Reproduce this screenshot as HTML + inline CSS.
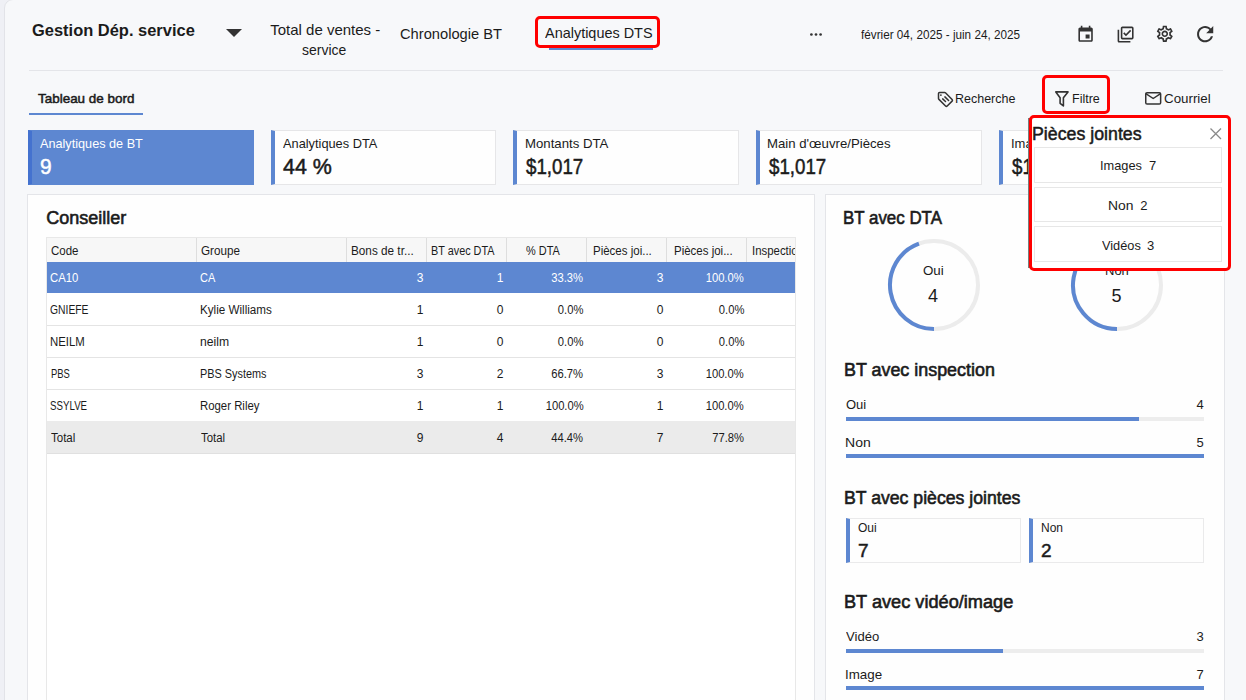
<!DOCTYPE html>
<html lang="fr">
<head>
<meta charset="utf-8">
<title>Gestion Dép. service</title>
<style>
*{box-sizing:border-box;margin:0;padding:0}
html,body{width:1246px;height:700px;overflow:hidden}
body{background:#eff0f5;font-family:"Liberation Sans",sans-serif;color:#1b1b1b;position:relative}
.abs{position:absolute}
.t{position:absolute;white-space:nowrap;line-height:1;transform-origin:0 0}
#shell{position:absolute;left:4px;top:-1px;width:1262px;height:720px;background:#f7f8fa;border:1px solid #e2e3e8;border-radius:9px}
.bd{font-weight:bold}
.sb{font-weight:normal;-webkit-text-stroke:0.5px currentColor}
.blue{background:#5d87d1}
.redbox{position:absolute;border:3px solid #ff0000;border-radius:5px}
.kpi{position:absolute;top:129.5px;height:55.5px;width:225.7px;background:#fefefe;border:1px solid #e6e6e8;border-left:4px solid #5d87d1}
.kpi.sel{background:#5d87d1;border-color:#5d87d1;border-left-color:#4472cf}
.card{position:absolute;background:#fefefe;border:1px solid #e4e5e9}
.h2{font-size:18px;font-weight:normal;-webkit-text-stroke:0.6px currentColor}
.bar{position:absolute;left:846px;width:358px;height:4px;background:#ededed}
.bar i{display:block;height:4px;background:#5d87d1}
.mini{position:absolute;top:518px;height:44.5px;background:#fefefe;border:1px solid #eaeaeb;border-left:4px solid #5d87d1}
.pitem{position:absolute;left:1034px;width:188px;background:#fff;border:1px solid #e7e7e7}
svg{position:absolute;overflow:visible}
.th,.td{font-size:12px}
.t.r{transform-origin:100% 0}
</style>
</head>
<body>
<div id="shell"></div>

<!-- ===== header ===== -->
<div class="t bd" id="t_title" style="left:31.7px;top:22px;font-size:17px;transform:scaleX(0.968)">Gestion Dép. service</div>
<svg style="left:226px;top:29px" width="16" height="8" viewBox="0 0 16 8"><path d="M0 0h16l-8 8z" fill="#333"/></svg>

<div class="t" id="t_tv1" style="left:270.2px;top:22px;font-size:15px">Total de ventes -</div>
<div class="t" id="t_tv2" style="left:302.2px;top:42px;font-size:15px;transform:scaleX(0.932)">service</div>
<div class="t" id="t_chr" style="left:400.0px;top:26px;font-size:15px;transform:scaleX(0.979)">Chronologie BT</div>
<div class="abs" style="left:549px;top:47px;width:104px;height:3px;background:#5d87d1"></div>
<div class="redbox" style="left:535px;top:16px;width:125px;height:32px"></div>
<div class="t" id="t_ana" style="left:545.0px;top:25px;font-size:15px;transform:scaleX(0.963)">Analytiques DTS</div>

<svg style="left:810px;top:32.5px" width="12" height="3" viewBox="0 0 12 3"><circle cx="1.4" cy="1.5" r="1.35" fill="#333"/><circle cx="6" cy="1.5" r="1.35" fill="#333"/><circle cx="10.6" cy="1.5" r="1.35" fill="#333"/></svg>
<div class="t" id="t_date" style="left:861.2px;top:28.7px;font-size:12px;transform:scaleX(0.977)">février 04, 2025 - juin 24, 2025</div>

<!-- icons -->
<svg style="left:1075.8px;top:25.4px" width="19.2" height="19.2" viewBox="0 0 24 24"><path fill="#333" d="M17 12h-5v5h5v-5zM16 1v2H8V1H6v2H5c-1.11 0-1.99.9-1.99 2L3 19c0 1.1.89 2 2 2h14c1.1 0 2-.9 2-2V5c0-1.1-.9-2-2-2h-1V1h-2zm3 18H5V8h14v11z"/></svg>
<svg style="left:1115.8px;top:25px" width="19.2" height="19.2" viewBox="0 0 24 24"><path fill="#333" d="M20 4v12H8V4h12m0-2H8c-1.1 0-2 .9-2 2v12c0 1.1.9 2 2 2h12c1.1 0 2-.9 2-2V4c0-1.1-.9-2-2-2zm-7.530 12L9 10.500l1.400-1.410 2.070 2.080L17.600 6 19 7.410 12.470 14zM4 6H2v14c0 1.100.9 2 2 2h14v-2H4V6z"/></svg>
<svg style="left:1155.2px;top:24.2px" width="19.6" height="19.6" viewBox="0 0 24 24"><path fill="#333" d="M19.430 12.980c.040-.320.070-.640.070-.980 0-.340-.030-.660-.070-.980l2.110-1.650c.190-.150.240-.420.120-.640l-2-3.460c-.090-.160-.260-.250-.440-.250-.060 0-.120.010-.170.030l-2.490 1c-.520-.4-1.080-.730-1.690-.980l-.380-2.650C14.460 2.180 14.250 2 14 2h-4c-.250 0-.460.180-.490.420l-.380 2.650c-.610.250-1.170.590-1.690.980l-2.490-1c-.060-.020-.120-.030-.180-.030-.170 0-.340.090-.430.250l-2 3.460c-.130.220-.070.490.120.640l2.110 1.650c-.040.320-.070.650-.070.980 0 .330.030.660.070.980l-2.110 1.650c-.190.150-.240.420-.120.640l2 3.460c.090.160.260.250.440.250.060 0 .120-.010.170-.030l2.490-1c.520.400 1.080.730 1.690.980l.380 2.650c.030.240.240.420.490.420h4c.250 0 .460-.180.490-.420l.380-2.650c.610-.250 1.170-.590 1.690-.980l2.490 1c.060.020.120.030.180.030.170 0 .340-.090.430-.250l2-3.460c.120-.220.070-.490-.120-.640l-2.110-1.650zm-1.980-1.710c.040.310.050.520.050.730 0 .210-.020.430-.050.730l-.140 1.130.890.700 1.080.840-.7 1.210-1.270-.510-1.040-.420-.9.680c-.430.320-.840.560-1.250.730l-1.060.430-.160 1.130-.2 1.350h-1.400l-.190-1.350-.160-1.130-1.060-.430c-.430-.180-.830-.410-1.230-.710l-.910-.7-1.060.430-1.270.510-.7-1.210 1.080-.840.890-.7-.140-1.130c-.030-.310-.050-.540-.050-.740s.020-.430.050-.730l.140-1.130-.890-.7-1.080-.840.700-1.210 1.270.510 1.040.420.900-.680c.430-.320.840-.560 1.250-.730l1.060-.430.160-1.130.2-1.350h1.390l.190 1.350.160 1.130 1.060.430c.430.180.830.410 1.230.710l.910.700 1.060-.430 1.270-.510.700 1.210-1.070.850-.890.700.140 1.130zM12 8c-2.210 0-4 1.790-4 4s1.790 4 4 4 4-1.790 4-4-1.790-4-4-4zm0 6c-1.100 0-2-.9-2-2s.9-2 2-2 2 .9 2 2-.9 2-2 2z"/></svg>
<svg style="left:1192.9px;top:21.9px" width="24.3" height="24.3" viewBox="0 0 24 24"><path fill="#333" d="M17.650 6.350C16.200 4.900 14.210 4 12 4c-4.420 0-7.990 3.580-7.990 8s3.570 8 7.990 8c3.730 0 6.840-2.550 7.730-6h-2.080c-.820 2.330-3.040 4-5.650 4-3.310 0-6-2.690-6-6s2.690-6 6-6c1.660 0 3.140.69 4.220 1.780L13 11h7V4l-2.350 2.350z"/></svg>

<div class="abs" style="left:29px;top:70px;width:1194px;height:1px;background:#e4e5e9"></div>

<!-- ===== toolbar ===== -->
<div class="t sb" id="t_tab" style="left:37.5px;top:92px;font-size:13px;transform:scaleX(1.034)">Tableau de bord</div>
<div class="abs" style="left:29px;top:113px;width:114px;height:2px;background:#5d87d1"></div>

<!-- tag icon -->
<svg style="left:937px;top:90.5px" width="16.5" height="16.5" viewBox="0 0 16.5 16.5" fill="none" stroke="#333" stroke-width="1.5" stroke-linejoin="round" stroke-linecap="round"><path d="M1.500 2.600 C1.500 2 2 1.600 2.600 1.600 L7.700 1.600 C8.100 1.600 8.400 1.750 8.700 2.050 L15.100 8.450 C15.600 8.950 15.600 9.600 15.100 10.100 L10.200 15 C9.700 15.500 9.050 15.500 8.550 15 L1.950 8.400 C1.650 8.100 1.500 7.800 1.500 7.400 Z"/><path d="M7.900 5.900 L11.600 9.500 M5.700 7.900 L8.500 10.500"/><circle cx="3.900" cy="4.100" r="0.900" fill="#333" stroke="none"/></svg>
<div class="t" id="t_rech" style="left:955.2px;top:92px;font-size:13px;transform:scaleX(0.961)">Recherche</div>

<div class="redbox" style="left:1042px;top:75px;width:68px;height:39px"></div>
<svg style="left:1054px;top:90px" width="16" height="18" viewBox="0 0 16 18" fill="none" stroke="#333" stroke-width="1.600" stroke-linejoin="round"><path d="M1.800 1.900 H14 L9.400 7.700 V15.900 L6.100 13.300 V7.700 Z"/></svg>
<div class="t" id="t_filt" style="left:1072.2px;top:92px;font-size:13px;transform:scaleX(0.962)">Filtre</div>

<svg style="left:1145.200px;top:92.100px" width="16.400" height="13" viewBox="0 0 16.400 13" fill="none" stroke="#333" stroke-width="1.500" stroke-linejoin="round" stroke-linecap="round"><rect x="0.750" y="0.750" width="14.900" height="11.300" rx="1.300"/><path d="M1.200 1.800 L8.200 6.500 L15.200 1.800"/></svg>
<div class="t" id="t_cour" style="left:1163.5px;top:92px;font-size:13px;transform:scaleX(1.026)">Courriel</div>

<!-- ===== KPI cards ===== -->
<div class="kpi sel" style="left:28px"></div>
<div class="kpi" style="left:270.700px"></div>
<div class="kpi" style="left:513.400px"></div>
<div class="kpi" style="left:756.100px"></div>
<div class="kpi" style="left:998.800px"></div>

<div class="t" id="k1a" style="left:40.0px;top:137px;font-size:13px;color:#fff;transform:scaleX(0.975)">Analytiques de BT</div>
<div class="t sb" id="k1b" style="left:40.3px;top:156px;font-size:22px;color:#fff;transform:scaleX(0.950)">9</div>
<div class="t" id="k2a" style="left:283.0px;top:137px;font-size:13px;transform:scaleX(0.984)">Analytiques DTA</div>
<div class="t sb" id="k2b" style="left:283.3px;top:156px;font-size:22px;transform:scaleX(0.974)">44 %</div>
<div class="t" id="k3a" style="left:525.0px;top:137px;font-size:13px;transform:scaleX(1.016)">Montants DTA</div>
<div class="t sb" id="k3b" style="left:526.2px;top:156px;font-size:22px;transform:scaleX(0.851)">$1,017</div>
<div class="t" id="k4a" style="left:767.3px;top:137px;font-size:13px;transform:scaleX(1.015)">Main d'œuvre/Pièces</div>
<div class="t sb" id="k4b" style="left:769.0px;top:156px;font-size:22px;transform:scaleX(0.851)">$1,017</div>
<div class="t" id="k5a" style="left:1011px;top:137px;font-size:13px">Images/Vidéos</div>
<div class="t sb" id="k5b" style="left:1011.500px;top:156px;font-size:22px;transform:scaleX(0.851)">$1,017</div>

<!-- ===== left main card ===== -->
<div class="card" style="left:27px;top:194px;width:788px;height:520px"></div>
<div class="t h2" id="h_cons" style="left:46.3px;top:209px;transform:scaleX(1.000)">Conseiller</div>

<!-- table frame -->
<div class="abs" id="tbl" style="left:46px;top:237px;width:750px;height:480px;border:1px solid #e8e8e8;background:#fff;overflow:hidden">
  <div class="abs" style="left:0;top:0;width:748px;height:24px;background:#f7f7f7"></div>
  <div class="abs" style="left:0;top:24px;width:748px;height:30.700px;background:#5d87d1"></div>
  <div class="abs" style="left:0;top:87px;width:748px;height:1px;background:#e4e4e4"></div>
  <div class="abs" style="left:0;top:119px;width:748px;height:1px;background:#e4e4e4"></div>
  <div class="abs" style="left:0;top:151px;width:748px;height:1px;background:#e4e4e4"></div>
  <div class="abs" style="left:0;top:183px;width:748px;height:1px;background:#e4e4e4"></div>
  <div class="abs" style="left:0;top:183.300px;width:748px;height:31.500px;background:#ebebeb"></div>
  <div class="abs" style="left:0;top:214.800px;width:748px;height:1px;background:#e0e0e0"></div>
  <!-- column separators (header only) -->
  <div class="abs" style="left:148.7px;top:0;width:1px;height:24px;background:#dedede"></div>
  <div class="abs" style="left:298.7px;top:0;width:1px;height:24px;background:#dedede"></div>
  <div class="abs" style="left:378.7px;top:0;width:1px;height:24px;background:#dedede"></div>
  <div class="abs" style="left:458.7px;top:0;width:1px;height:24px;background:#dedede"></div>
  <div class="abs" style="left:538.7px;top:0;width:1px;height:24px;background:#dedede"></div>
  <div class="abs" style="left:618.7px;top:0;width:1px;height:24px;background:#dedede"></div>
  <div class="abs" style="left:698.7px;top:0;width:1px;height:24px;background:#dedede"></div>
</div>
<div class="t th" id="th0" style="left:51.0px;top:245px;transform:scaleX(0.959)">Code</div>
<div class="t th" id="th1" style="left:201.0px;top:245px;transform:scaleX(0.975)">Groupe</div>
<div class="t th" id="th2" style="left:350.9px;top:245px;transform:scaleX(0.979)">Bons de tr...</div>
<div class="t th" id="th3" style="left:430.7px;top:245px;transform:scaleX(0.904)">BT avec DTA</div>
<div class="t th" id="th4" style="left:526.0px;top:245px;transform:scaleX(0.911)">% DTA</div>
<div class="t th" id="th5" style="left:593.0px;top:245px;transform:scaleX(0.958)">Pièces joi...</div>
<div class="t th" id="th6" style="left:673.9px;top:245px;transform:scaleX(0.957)">Pièces joi...</div>
<div class="abs" style="left:747px;top:238px;width:48px;height:24px;overflow:hidden"><div class="t th" id="th7" style="left:5px;top:7px;transform:scaleX(0.95)">Inspection</div></div>
<div class="t td" id="r0c0" style="left:50.0px;top:272px;color:#fff;transform:scaleX(0.940)">CA10</div>
<div class="t td" id="r0c1" style="left:200.0px;top:272px;color:#fff;transform:scaleX(0.913)">CA</div>
<div class="t td r" id="r0c2" style="right:822.5px;top:272px;color:#fff">3</div>
<div class="t td r" id="r0c3" style="right:742.5px;top:272px;color:#fff">1</div>
<div class="t td r" id="r0c4" style="right:662.5px;top:272px;color:#fff;transform:scaleX(0.935)">33.3%</div>
<div class="t td r" id="r0c5" style="right:582.5px;top:272px;color:#fff">3</div>
<div class="t td r" id="r0c6" style="right:502px;top:272px;color:#fff;transform:scaleX(0.935)">100.0%</div>
<div class="t td" id="r1c0" style="left:50.0px;top:304px;transform:scaleX(0.862)">GNIEFE</div>
<div class="t td" id="r1c1" style="left:199.8px;top:304px;transform:scaleX(0.971)">Kylie Williams</div>
<div class="t td r" id="r1c2" style="right:822.5px;top:304px">1</div>
<div class="t td r" id="r1c3" style="right:742.5px;top:304px">0</div>
<div class="t td r" id="r1c4" style="right:662.5px;top:304px;transform:scaleX(0.935)">0.0%</div>
<div class="t td r" id="r1c5" style="right:582.5px;top:304px">0</div>
<div class="t td r" id="r1c6" style="right:502px;top:304px;transform:scaleX(0.935)">0.0%</div>
<div class="t td" id="r2c0" style="left:49.7px;top:336px;transform:scaleX(0.948)">NEILM</div>
<div class="t td" id="r2c1" style="left:199.8px;top:336px;transform:scaleX(1.015)">neilm</div>
<div class="t td r" id="r2c2" style="right:822.5px;top:336px">1</div>
<div class="t td r" id="r2c3" style="right:742.5px;top:336px">0</div>
<div class="t td r" id="r2c4" style="right:662.5px;top:336px;transform:scaleX(0.935)">0.0%</div>
<div class="t td r" id="r2c5" style="right:582.5px;top:336px">0</div>
<div class="t td r" id="r2c6" style="right:502px;top:336px;transform:scaleX(0.935)">0.0%</div>
<div class="t td" id="r3c0" style="left:50.7px;top:368px;transform:scaleX(0.785)">PBS</div>
<div class="t td" id="r3c1" style="left:199.9px;top:368px;transform:scaleX(0.906)">PBS Systems</div>
<div class="t td r" id="r3c2" style="right:822.5px;top:368px">3</div>
<div class="t td r" id="r3c3" style="right:742.5px;top:368px">2</div>
<div class="t td r" id="r3c4" style="right:662.5px;top:368px;transform:scaleX(0.935)">66.7%</div>
<div class="t td r" id="r3c5" style="right:582.5px;top:368px">3</div>
<div class="t td r" id="r3c6" style="right:502px;top:368px;transform:scaleX(0.935)">100.0%</div>
<div class="t td" id="r4c0" style="left:49.8px;top:400px;transform:scaleX(0.810)">SSYLVE</div>
<div class="t td" id="r4c1" style="left:199.9px;top:400px;transform:scaleX(0.948)">Roger Riley</div>
<div class="t td r" id="r4c2" style="right:822.5px;top:400px">1</div>
<div class="t td r" id="r4c3" style="right:742.5px;top:400px">1</div>
<div class="t td r" id="r4c4" style="right:662.5px;top:400px;transform:scaleX(0.935)">100.0%</div>
<div class="t td r" id="r4c5" style="right:582.5px;top:400px">1</div>
<div class="t td r" id="r4c6" style="right:502px;top:400px;transform:scaleX(0.935)">100.0%</div>
<div class="t td" id="r5c0" style="left:50.7px;top:432px;transform:scaleX(0.960)">Total</div>
<div class="t td" id="r5c1" style="left:201.0px;top:432px;transform:scaleX(0.952)">Total</div>
<div class="t td r" id="r5c2" style="right:822.5px;top:432px">9</div>
<div class="t td r" id="r5c3" style="right:742.5px;top:432px">4</div>
<div class="t td r" id="r5c4" style="right:662.5px;top:432px;transform:scaleX(0.935)">44.4%</div>
<div class="t td r" id="r5c5" style="right:582.5px;top:432px">7</div>
<div class="t td r" id="r5c6" style="right:502px;top:432px;transform:scaleX(0.935)">77.8%</div>

<!-- ===== right card ===== -->
<div class="card" style="left:825px;top:194px;width:400px;height:520px"></div>
<div class="t h2" id="h_dta" style="left:843.3px;top:208.5px;transform:scaleX(0.939)">BT avec DTA</div>

<svg style="left:884px;top:235px" width="100" height="100" viewBox="-50 -50 100 100" fill="none" stroke-width="4"><circle r="44" stroke="#ececec"/><path d="M0 44 A44 44 0 0 1 -15.050 -41.350" stroke="#5d87d1"/></svg>
<svg style="left:1067px;top:235px" width="100" height="100" viewBox="-50 -50 100 100" fill="none" stroke-width="4"><circle r="44" stroke="#ececec"/><path d="M0 44 A44 44 0 1 1 15.050 -41.350" stroke="#5d87d1"/></svg>
<div class="t" id="g1a" style="left:923.0px;top:263.7px;font-size:13px;transform:scaleX(1.026)">Oui</div>
<div class="t" id="g1b" style="left:928.0px;top:287px;font-size:18px">4</div>
<div class="t" id="g2a" style="left:1105px;top:263.7px;font-size:13px">Non</div>
<div class="t" id="g2b" style="left:1111.5px;top:287px;font-size:18px">5</div>

<div class="t h2" id="h_insp" style="left:844.2px;top:360.8px;transform:scaleX(0.994)">BT avec inspection</div>
<div class="t" id="b1a" style="left:846.0px;top:398px;font-size:13px">Oui</div>
<div class="t" id="b1b" style="left:1196.500px;top:398px;font-size:13px">4</div>
<div class="bar" style="top:417px"><i style="width:293px"></i></div>
<div class="t" id="b2a" style="left:845.0px;top:436px;font-size:13px;transform:scaleX(1.079)">Non</div>
<div class="t" id="b2b" style="left:1196.500px;top:436px;font-size:13px">5</div>
<div class="bar" style="top:454px"><i style="width:358px"></i></div>

<div class="t h2" id="h_pj" style="left:843.9px;top:489.0px;transform:scaleX(0.981)">BT avec pièces jointes</div>
<div class="mini" style="left:846px;width:175px"></div>
<div class="mini" style="left:1029px;width:175px"></div>
<div class="t" id="m1a" style="left:858.0px;top:521.8px;font-size:12px">Oui</div>
<div class="t sb" id="m1b" style="left:858.0px;top:540.8px;font-size:19px">7</div>
<div class="t" id="m2a" style="left:1041px;top:521.8px;font-size:12px">Non</div>
<div class="t sb" id="m2b" style="left:1041px;top:540.8px;font-size:19px">2</div>

<div class="t h2" id="h_vid" style="left:844.2px;top:592.7px;transform:scaleX(1.009)">BT avec vidéo/image</div>
<div class="t" id="b3a" style="left:846.0px;top:630px;font-size:13px;transform:scaleX(1.006)">Vidéo</div>
<div class="t" id="b3b" style="left:1196.500px;top:630px;font-size:13px">3</div>
<div class="bar" style="top:649px"><i style="width:157px"></i></div>
<div class="t" id="b4a" style="left:845.4px;top:668px;font-size:13px;transform:scaleX(1.029)">Image</div>
<div class="t" id="b4b" style="left:1196.500px;top:668px;font-size:13px">7</div>
<div class="bar" style="top:686px"><i style="width:358px"></i></div>

<!-- ===== popup ===== -->
<div class="abs" style="left:1028px;top:118px;width:2px;height:150px;background:#77807f"></div>
<div class="abs" style="left:1029px;top:115px;width:202px;height:156px;background:#fff;border:3px solid #ff0000;border-radius:5px"></div>
<div class="t sb" id="p_t" style="left:1032.3px;top:125.7px;font-size:17.500px;transform:scaleX(1.015)">Pièces jointes</div>
<svg style="left:1209.800px;top:128px" width="11.500" height="11.500" viewBox="0 0 11.500 11.500" stroke="#8a8a8a" stroke-width="1.300" fill="none"><path d="M0.500 0.500 L11 11 M11 0.500 L0.500 11"/></svg>
<div class="pitem" style="top:147px;height:35.500px"></div>
<div class="pitem" style="top:187px;height:34.500px"></div>
<div class="pitem" style="top:226px;height:35.500px"></div>
<div class="t" id="p1a" style="left:1099.9px;top:159px;font-size:13px;transform:scaleX(0.984)">Images</div>
<div class="t" id="p1b" style="left:1149.0px;top:159px;font-size:13px">7</div>
<div class="t" id="p2a" style="left:1108.0px;top:199px;font-size:13px;transform:scaleX(1.067)">Non</div>
<div class="t" id="p2b" style="left:1140.3px;top:199px;font-size:13px">2</div>
<div class="t" id="p3a" style="left:1102.2px;top:239px;font-size:13px;transform:scaleX(0.982)">Vidéos</div>
<div class="t" id="p3b" style="left:1147.0px;top:239px;font-size:13px">3</div>
</body>
</html>
